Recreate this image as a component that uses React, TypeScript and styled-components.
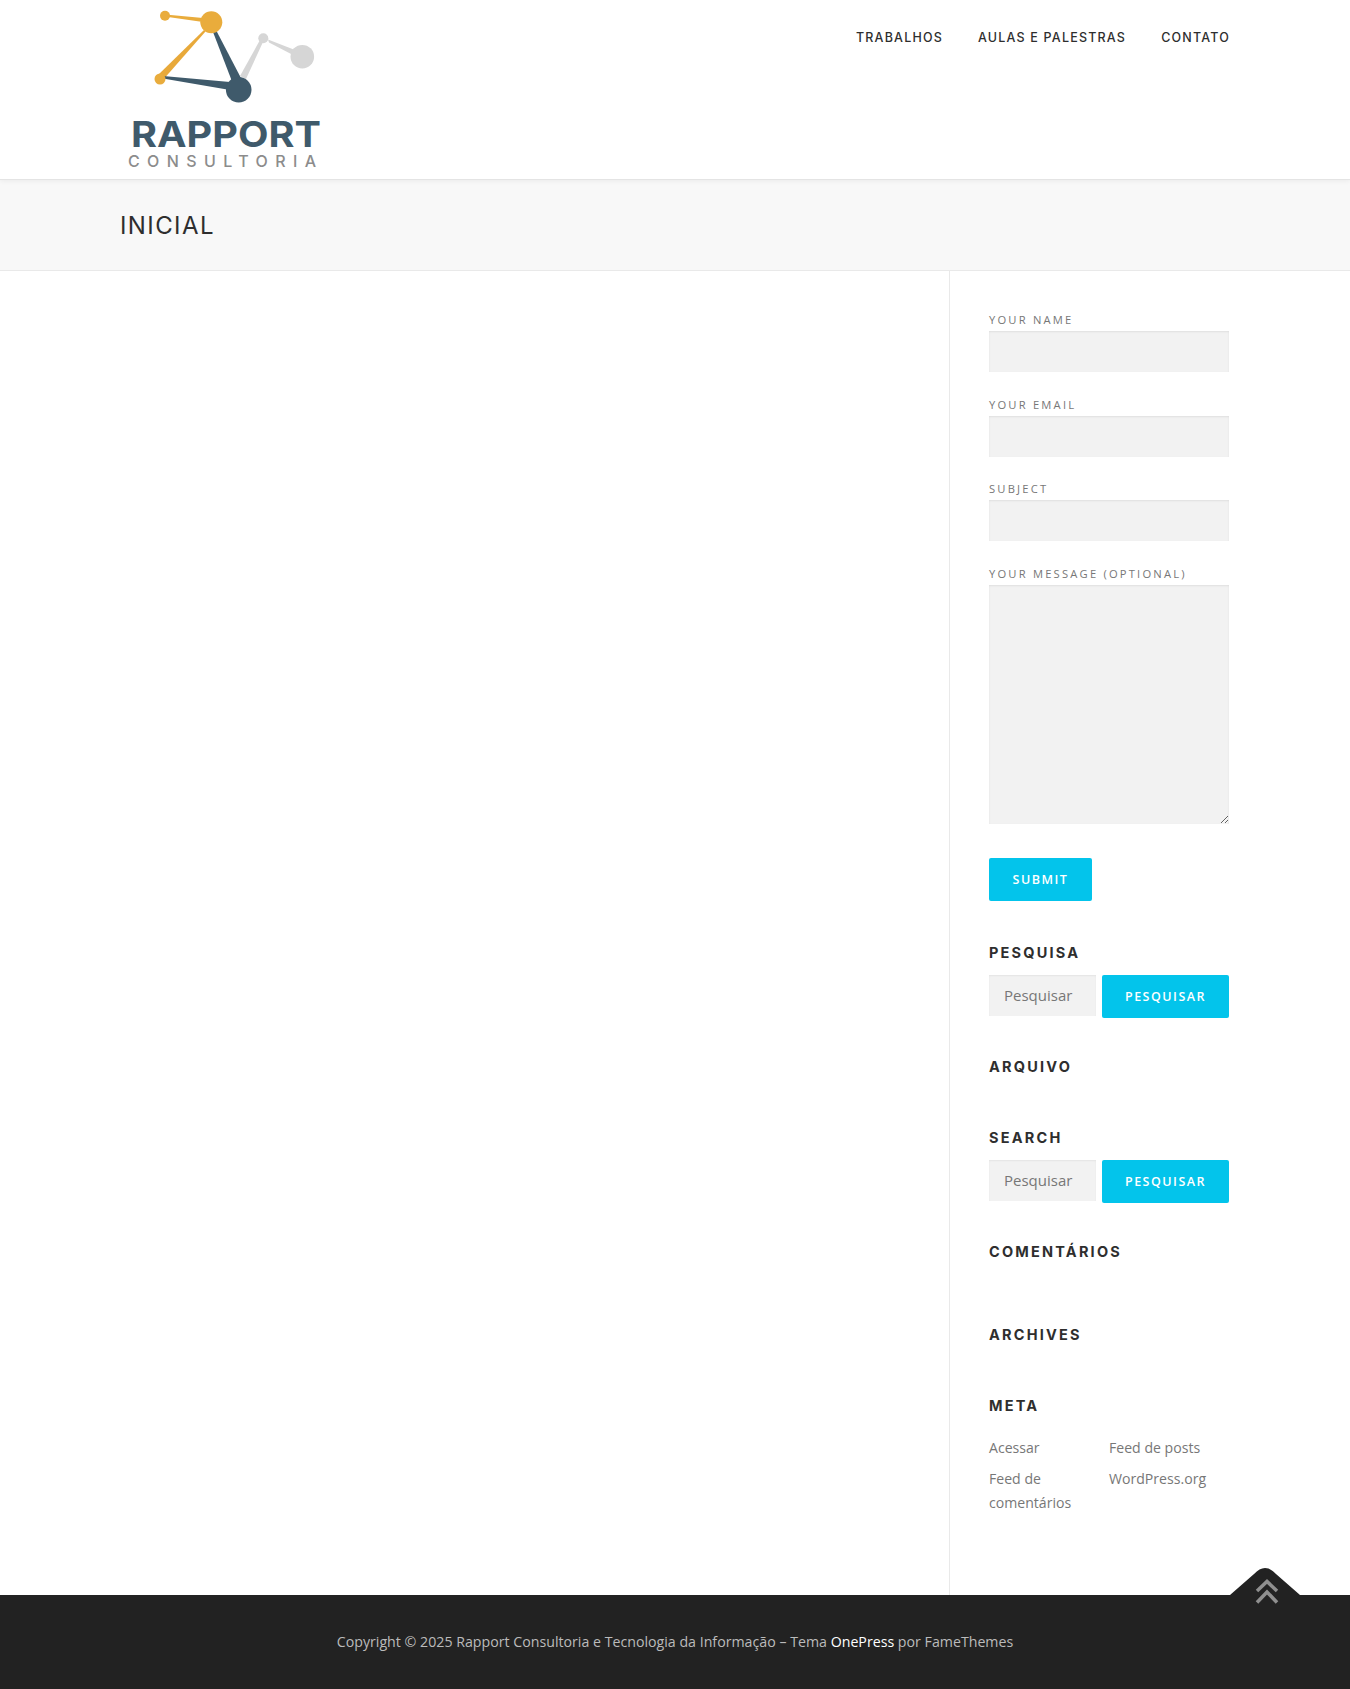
import React from "react";
import styled, { createGlobalStyle } from "styled-components";

const GlobalStyle = createGlobalStyle`
  html, body {
    margin: 0;
    padding: 0;
    background: #ffffff;
    font-family: "Open Sans", "Liberation Sans", sans-serif;
    font-size: 14px;
    color: #777777;
  }
  * {
    box-sizing: border-box;
  }
`;

const Logo: React.FC = () => (
  <LogoSvg viewBox="120 0 210 179" aria-label="Rapport Consultoria">
    <path d="M168 14.8 L203 18 L203 22 L168 17 Z" fill="#e9ac3c" />
    <path d="M204 30 L205.5 31.5 L162 81 L157 76 Z" fill="#e8a93a" />
    <path d="M213 32 L216.5 31 L242 80 L233 84 Z" fill="#3f5a6b" />
    <path d="M163 76 L230 82 L230 90 L163 78.5 Z" fill="#3f5a6b" />
    <path d="M260 40 L263 42 L246 79 L240 76 Z" fill="#d6d6d6" />
    <path d="M268 39.5 L269 42.5 L293 55 L295 50 Z" fill="#d6d6d6" />
    <circle cx="211.3" cy="22.3" r="11" fill="#e9ac3c" />
    <circle cx="165" cy="15.7" r="5" fill="#e9ac3c" />
    <circle cx="160" cy="79" r="5.5" fill="#e9ac3c" />
    <circle cx="238.7" cy="89.7" r="12.8" fill="#3f5a6b" />
    <circle cx="263.3" cy="38.3" r="5" fill="#d6d6d6" />
    <circle cx="302.3" cy="56.7" r="11.8" fill="#d6d6d6" />
    <LogoTitle x="131" y="147" textLength="190" lengthAdjust="spacingAndGlyphs">
      RAPPORT
    </LogoTitle>
    <LogoSub x="128" y="167" textLength="188">
      CONSULTORIA
    </LogoSub>
  </LogoSvg>
);

const SearchForm: React.FC = () => (
  <SearchRow>
    <SearchInput type="text" placeholder="Pesquisar" />
    <Button $wide>Pesquisar</Button>
  </SearchRow>
);

const App: React.FC = () => {
  const navItems = ["Trabalhos", "Aulas e Palestras", "Contato"];
  const fields = ["Your Name", "Your Email", "Subject"];

  return (
    <>
      <GlobalStyle />
      <Header>
        <HeaderInner>
          <Logo />
          <Nav>
            {navItems.map(item => (
              <NavLink href="#" key={item}>
                {item}
              </NavLink>
            ))}
          </Nav>
        </HeaderInner>
      </Header>
      <TitleBar>
        <Container>
          <PageTitle>Inicial</PageTitle>
        </Container>
      </TitleBar>
      <Container>
        <Columns>
          <Main />
          <Sidebar>
            <Form>
              {fields.map(field => (
                <Field key={field}>
                  <Label>{field}</Label>
                  <TextInput type="text" />
                </Field>
              ))}
              <Field>
                <Label>Your Message (optional)</Label>
                <MessageInput />
              </Field>
              <Button>Submit</Button>
            </Form>
            <WidgetTitle $top={42} $bottom={12}>Pesquisa</WidgetTitle>
            <SearchForm />
            <WidgetTitle $top={39} $bottom={0}>Arquivo</WidgetTitle>
            <WidgetTitle $top={51} $bottom={12}>Search</WidgetTitle>
            <SearchForm />
            <WidgetTitle $top={39} $bottom={0}>Comentários</WidgetTitle>
            <WidgetTitle $top={63} $bottom={0}>Archives</WidgetTitle>
            <WidgetTitle $top={51} $bottom={20}>Meta</WidgetTitle>
            <MetaList>
              <MetaLink href="#">Acessar</MetaLink>
              <MetaLink href="#">Feed de posts</MetaLink>
              <MetaLink href="#">Feed de comentários</MetaLink>
              <MetaLink href="#">WordPress.org</MetaLink>
            </MetaList>
          </Sidebar>
        </Columns>
      </Container>
      <Footer>
        <BackToTop href="#" aria-label="Voltar ao topo">
          <BackShape viewBox="0 0 70 27">
            <path d="M0 27 L24 6 Q35 -6 46 6 L70 27 Z" fill="#222222" />
          </BackShape>
          <BackIcon viewBox="0 0 26 28">
            <path d="M3 13 L13 3.5 L23 13" />
            <path d="M3 24.5 L13 14 L23 24.5" />
          </BackIcon>
        </BackToTop>
        Copyright © 2025 Rapport Consultoria e Tecnologia da Informação – Tema{" "}
        <FooterLink href="#">OnePress</FooterLink> por FameThemes
      </Footer>
    </>
  );
};

const Header = styled.header`
  position: relative;
  height: 180px;
  background: #ffffff;
  border-bottom: 1px solid #e4e4e4;
  box-shadow: 0 1px 5px rgba(0, 0, 0, 0.06);
`;

const HeaderInner = styled.div`
  display: flex;
  justify-content: space-between;
  align-items: flex-start;
  width: 1110px;
  margin: 0 auto;
`;

const LogoSvg = styled.svg`
  display: block;
  width: 210px;
  height: 179px;
`;

const LogoTitle = styled.text`
  font-family: "Inter", "Liberation Sans", sans-serif;
  font-size: 36px;
  font-weight: 700;
  fill: #3f5a6b;
`;

const LogoSub = styled.text`
  font-family: "Inter", "Liberation Sans", sans-serif;
  font-size: 16px;
  font-weight: 500;
  fill: #8c8c8c;
`;

const Nav = styled.nav`
  display: flex;
  gap: 35px;
  padding-top: 29px;
`;

const NavLink = styled.a`
  font-family: "Inter", "Liberation Sans", sans-serif;
  font-size: 12.5px;
  font-weight: 500;
  line-height: 18px;
  letter-spacing: 1.2px;
  text-transform: uppercase;
  text-decoration: none;
  color: #2e2e2e;
`;

const TitleBar = styled.div`
  height: 91px;
  padding-top: 1px;
  background: #f8f8f8;
  border-bottom: 1px solid #e9e9e9;
  display: flex;
  align-items: center;
`;

const Container = styled.div`
  width: 1110px;
  margin: 0 auto;
`;

const PageTitle = styled.h1`
  margin: 0;
  font-family: "Inter", "Liberation Sans", sans-serif;
  font-size: 24px;
  font-weight: 400;
  letter-spacing: 1.4px;
  line-height: 30px;
  text-transform: uppercase;
  color: #2e2e2e;
`;

const Columns = styled.div`
  display: flex;
  height: 1324px;
`;

const Main = styled.main`
  flex: 1;
`;

const Sidebar = styled.aside`
  width: 281px;
  border-left: 1px solid #e9e9e9;
  padding: 40px 1px 0 39px;
`;

const Form = styled.form`
  display: flex;
  flex-direction: column;
  align-items: flex-start;
`;

const Field = styled.div`
  width: 100%;
  margin-bottom: 23.5px;
  &:last-of-type {
    margin-bottom: 34px;
  }
`;

const Label = styled.label`
  display: block;
  margin-bottom: 2px;
  font-size: 11.2px;
  font-weight: 500;
  line-height: 18px;
  letter-spacing: 2.2px;
  text-transform: uppercase;
  color: #777777;
`;

const TextInput = styled.input`
  display: block;
  width: 100%;
  height: 41px;
  padding: 0 15px;
  border: none;
  border-radius: 0;
  background: #f2f2f2;
  box-shadow: inset 0 1px 2px rgba(0, 0, 0, 0.08);
  outline: none;
`;

const MessageInput = styled.textarea`
  display: block;
  width: 100%;
  height: 239px;
  padding: 15px;
  border: none;
  border-radius: 0;
  background: #f2f2f2;
  box-shadow: inset 0 1px 2px rgba(0, 0, 0, 0.08);
  outline: none;
`;

const Button = styled.button<{ $wide?: boolean }>`
  flex: ${p => (p.$wide ? "0 0 127px" : "none")};
  width: ${p => (p.$wide ? "127px" : "103px")};
  height: 43px;
  padding: 0;
  border: none;
  border-radius: 2px;
  background: #03c4eb;
  color: #ffffff;
  font-family: "Open Sans", "Liberation Sans", sans-serif;
  font-size: 12.5px;
  font-weight: 600;
  letter-spacing: 1.5px;
  text-transform: uppercase;
`;

const WidgetTitle = styled.h2<{ $top: number; $bottom: number }>`
  margin: ${p => p.$top}px 0 ${p => p.$bottom}px;
  font-family: "Inter", "Liberation Sans", sans-serif;
  font-size: 14.5px;
  font-weight: 700;
  line-height: 20px;
  letter-spacing: 2.2px;
  text-transform: uppercase;
  color: #2e2e2e;
`;

const SearchRow = styled.div`
  display: flex;
  align-items: flex-start;
  gap: 6px;
`;

const SearchInput = styled.input`
  width: 107px;
  height: 41px;
  padding: 0 15px;
  border: none;
  background: #f2f2f2;
  box-shadow: inset 0 1px 2px rgba(0, 0, 0, 0.06);
  font-family: "Open Sans", "Liberation Sans", sans-serif;
  font-size: 15px;
  outline: none;
  &::placeholder {
    color: #777777;
    opacity: 1;
  }
`;

const MetaList = styled.div`
  display: grid;
  grid-template-columns: 120px 120px;
  row-gap: 7px;
`;

const MetaLink = styled.a`
  font-size: 14.1px;
  line-height: 24px;
  color: #777777;
  text-decoration: none;
`;

const Footer = styled.footer`
  position: relative;
  height: 94px;
  padding-top: 36px;
  background: #222222;
  color: #bbbbbb;
  font-size: 14.2px;
  line-height: 22px;
  text-align: center;
`;

const FooterLink = styled.a`
  color: #ffffff;
  text-decoration: none;
`;

const BackToTop = styled.a`
  position: absolute;
  top: -27px;
  right: 50px;
  display: block;
  width: 70px;
  height: 40px;
`;

const BackShape = styled.svg`
  display: block;
  width: 70px;
  height: 27px;
`;

const BackIcon = styled.svg`
  position: absolute;
  top: 10px;
  left: 24px;
  width: 26px;
  height: 28px;
  fill: none;
  stroke: #8f8f8f;
  stroke-width: 3.5;
`;

export default App;
